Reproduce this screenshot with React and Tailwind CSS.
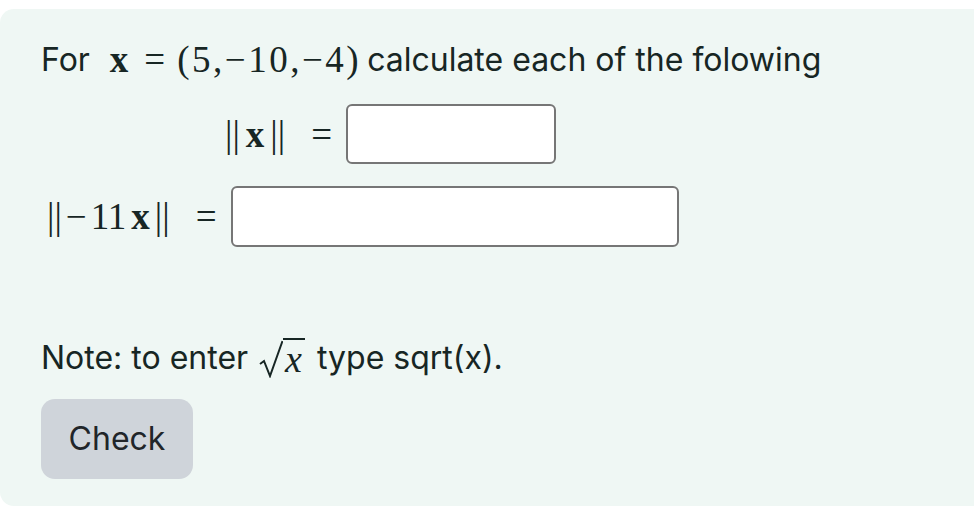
export default function App() {
  return (
    <div className="pt-[9px] bg-white min-h-[524px]" style={{ fontFamily: "Inter, 'Noto Sans', sans-serif" }}>
      <div className="bg-[#eff7f4] rounded-l-[14px] h-[497px] pl-[41px] pt-[27px] text-[#172624] flex flex-col items-start">
        <div className="h-[48px] flex items-center text-[32px] whitespace-nowrap">
          <span>For</span>
          <span className="ml-[20px] font-['Liberation_Serif',serif] text-[37px] flex items-center">
            <b>x</b>
            <span className="ml-[16px] mr-[12px]">=</span>
            <span className="tracking-[2.5px]">(5,−10,−4)</span>
          </span>
          <span className="ml-[6px]">calculate each of the folowing</span>
        </div>

        <MathRow
          label={<>||<b className="mx-[6px]">x</b>||</>}
          offset="ml-[184px]"
          box="w-[210px] h-[60px]"
          className="mt-[20px]"
        />
        <MathRow
          label={<>||<span className="ml-[4px] mr-[4px]">−</span>11<b className="mx-[5px]">x</b>||</>}
          offset="ml-[6px]"
          box="w-[448px] h-[61px]"
          className="mt-[22px]"
        />

        <div className="mt-[87px] h-[48px] flex items-center text-[32px] whitespace-nowrap">
          <span>Note: to enter</span>
          <Sqrt />
          <span>type sqrt(x).</span>
        </div>

        <button
          type="button"
          className="mt-[17px] w-[152px] h-[80px] rounded-[14px] bg-[#cfd4da] text-[32px] text-[#212529]"
        >
          Check
        </button>
      </div>
    </div>
  )
}

function MathRow({ label, offset, box, className }) {
  return (
    <div className={`${className} ${offset} flex items-center`}>
      <span className="font-['Liberation_Serif',serif] text-[37px] leading-none whitespace-nowrap">{label}</span>
      <span className="ml-[26px] font-['Liberation_Serif',serif] text-[37px] leading-none">=</span>
      <input
        type="text"
        className={`ml-[14px] ${box} bg-white border-2 border-[#767676] rounded-[6px] outline-none px-2 text-[28px]`}
      />
    </div>
  )
}

function Sqrt() {
  return (
    <span className="ml-[11px] mr-[12px] flex items-end font-['Liberation_Serif',serif] text-[38px] leading-none">
      <svg width="24" height="38" viewBox="0 0 24 38" fill="none" stroke="currentColor" strokeWidth="2" strokeLinejoin="miter">
        <path d="M1 24 L5 21 L11 36 L23.5 1" />
      </svg>
      <span className="border-t-2 border-current italic pl-[2px] pr-[3px]">x</span>
    </span>
  )
}
